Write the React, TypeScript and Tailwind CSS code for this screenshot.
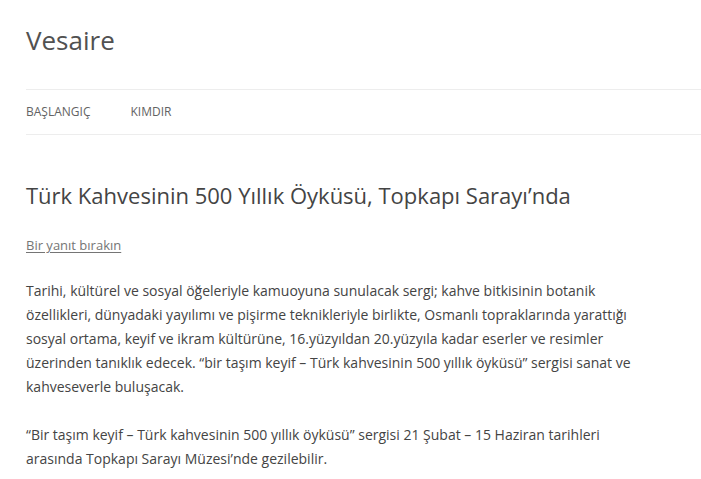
export default function App() {
  return (
    <div className="min-h-screen bg-white pl-[26px] font-['Open_Sans',sans-serif] text-[#444]">
      <header>
        <h1 className="pt-[16px] text-[26px] leading-[48px] text-[#515151]">Vesaire</h1>
        <nav className="mt-[25px] border-y border-[#ededed]">
          <ul className="flex gap-10 text-[12px] leading-[44px] uppercase text-[#636363]">
            <li>Başlangıç</li>
            <li>Kımdır</li>
          </ul>
        </nav>
      </header>

      <article className="w-[615px] pt-[45px]">
        <h2 className="text-[22px] leading-[30px] text-[#444]">
          Türk Kahvesinin 500 Yıllık Öyküsü, Topkapı Sarayı’nda
        </h2>
        <div className="mt-[25px] text-[13px] leading-[20px]">
          <a href="#" className="text-[#757575] underline underline-offset-2">
            Bir yanıt bırakın
          </a>
        </div>

        <div className="mt-[24px] space-y-6 text-[14px] leading-[24px]">
          <p>
            Tarihi, kültürel ve sosyal öğeleriyle kamuoyuna sunulacak sergi; kahve bitkisinin botanik
            özellikleri, dünyadaki yayılımı ve pişirme teknikleriyle birlikte, Osmanlı topraklarında yarattığı
            sosyal ortama, keyif ve ikram kültürüne, 16.yüzyıldan 20.yüzyıla kadar eserler ve resimler
            üzerinden tanıklık edecek. “bir taşım keyif – Türk kahvesinin 500 yıllık öyküsü” sergisi sanat ve
            kahveseverle buluşacak.
          </p>
          <p>
            “Bir taşım keyif – Türk kahvesinin 500 yıllık öyküsü” sergisi 21 Şubat – 15 Haziran tarihleri
            arasında Topkapı Sarayı Müzesi’nde gezilebilir.
          </p>
        </div>
      </article>
    </div>
  );
}
